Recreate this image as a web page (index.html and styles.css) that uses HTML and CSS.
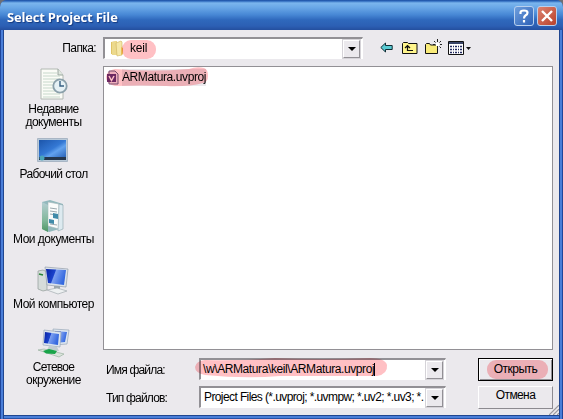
FILE: index.html
```html
<!DOCTYPE html>
<html lang="ru">
<head>
<meta charset="utf-8">
<title>Select Project File</title>
<link rel="stylesheet" href="styles.css">
</head>
<body>
<div class="window">
  <header class="titlebar">
    <h1>Select Project File</h1>
    <button class="cap help" aria-label="Help"><svg width="20" height="20" viewBox="0 0 20 20"><path d="M6.500 8V6.500Q6.500 4.500 10 4.500t3.500 2.200q0 1.600-1.800 2.600Q10 10.300 10 12.500M10 14v2.500" fill="none" stroke="#fff" stroke-width="2.200"/></svg></button>
    <button class="cap close" aria-label="Close"><svg width="20" height="20" viewBox="0 0 20 20"><path d="M5 5l10 10M15 5L5 15" stroke="#fff" stroke-width="2.400"/></svg></button>
  </header>
  <main class="client">
    <div class="lookin">
      <label><span class="t-folder">Папка:</span></label>
      <div class="combo">
        <svg class="folder" width="15" height="17" viewBox="0 0 15 17"><path d="M1 2l6-1v14l-6-1z" fill="#e0c468"/><path d="M2 2l5-1v14H2z" fill="#ecd98d"/><path d="M6 3l5-2 1 1v13l-5 1z" fill="#f5e7a8" stroke="#cfb45c" stroke-width=".6"/><path d="M11 7l2 1v6l-2 1z" fill="#e7bd54"/></svg>
        <span class="t-keil">keil</span>
        <i class="drop"></i>
        <b class="mark mark-keil"></b>
      </div>
      <div class="tools">
        <svg width="13" height="11" viewBox="0 0 13 11"><path d="M.8 5.500L5.500 1v2.500h6.700v4H5.500V10z" fill="#58cbd3" stroke="#102c34"/></svg>
        <svg width="16" height="14" viewBox="0 0 16 14"><path d="M.5 12.500v-10l1-1h4l1 1h8.500v10z" fill="#fff58c" stroke="#111"/><path d="M5.500 5v4.500H11M3 7l2.500-2.500L8 7" fill="none" stroke="#111" stroke-width="1.200"/></svg>
        <svg width="17" height="16" viewBox="0 0 17 16"><path d="M.5 14.500v-9l1-1h3l1 1.500h7v8.500z" fill="#f9eb79" stroke="#111"/><path d="M12.500 0v3m0 4v3M8 5.500h2m5 0h2M9 2l1.500 1.500m4 0L16 2M14.500 7.500L16 9" stroke="#222"/><path d="M11 4h3v3h-3z" fill="#fff"/></svg>
        <svg width="24" height="15" viewBox="0 0 24 15"><path d="M.5.5h15v13H.5z" fill="#fff" stroke="#111"/><path d="M1 1h14v2H1z" fill="#384468"/><path d="M2 5.500h2m1 0h1m1 0h2m1 0h1m1 0h2M2 8.500h2m1 0h1m1 0h2m1 0h1m1 0h2M2 11.500h2m1 0h1m1 0h2m1 0h1m1 0h2" stroke="#222b60" stroke-width="1.400"/><path d="M18 6h5l-2.500 3z" fill="#111"/></svg>
      </div>
    </div>
    <nav class="places">
      <a class="recent">
        <svg width="28" height="33" viewBox="0 0 28 33"><path d="M1 1h17l5 6v24H1z" fill="#fbfcf7" stroke="#b2b9b3"/><path d="M18 1v6h5" fill="#dfe7df" stroke="#9ba7a0"/><path d="M3 5h14M3 8h17M3 11h17M3 14h17M3 17h17M3 20h17M3 23h17M3 26h17M3 29h17" stroke="#c7d8cb"/><circle cx="20" cy="18" r="6.700" fill="#e6f1f5" stroke="#8ba0ab" stroke-width="1.800"/><path d="M20 13v5h4" fill="none" stroke="#365f82" stroke-width="1.400"/></svg>
        <span class="w1">Недавние</span><span class="w2">документы</span>
      </a>
      <a class="desktop">
        <svg width="31" height="25" viewBox="0 0 31 25"><defs><linearGradient id="d" x2="1" y2="1"><stop stop-color="#1c55aa"/><stop offset=".5" stop-color="#3478d4"/><stop offset=".65" stop-color="#62a2ee"/><stop offset="1" stop-color="#2b65b9"/></linearGradient></defs><path d="M.5.5h30v23H.5z" fill="#b9cad9" stroke="#a9b6c5"/><path d="M2 2h27v17H2z" fill="url(#d)"/><path d="M2 19h27v3H2z" fill="#25374d"/><circle cx="5" cy="20" r="2.500" fill="#4aa4b8"/></svg>
        <span class="w3">Рабочий стол</span>
      </a>
      <a class="docs">
        <svg width="25" height="34" viewBox="0 0 25 34"><defs><linearGradient id="g" y2="1" x2="0"><stop stop-color="#b4ced3"/><stop offset=".6" stop-color="#83b89c"/><stop offset="1" stop-color="#4d9664"/></linearGradient></defs><path d="M1 3l8-2 13 4v24l-14 4-7-3z" fill="#92b9bd"/><path d="M7 3l11 2v25L7 27z" fill="#fafcfb" stroke="#a4b7ba" stroke-width=".6"/><path d="M18 5l4 1v24l-5 2z" fill="#ddeaf0" stroke="#8aa6ad" stroke-width=".6"/><path d="M1 3l6 3v27l-6-3z" fill="url(#g)"/><path d="M9 9l7 1M9 12l7 1M9 15l3 .5M9 25l7 1" stroke="#9ca9af"/><path d="M12 14l5 1v5l-5-1zM8 20l5 1v4l-5-1z" fill="#408ba9"/></svg>
        <span class="w4">Мои документы</span>
      </a>
      <a class="computer">
        <svg width="33" height="29" viewBox="0 0 33 29"><defs><linearGradient id="m" x2="1" y2=".3"><stop stop-color="#0721a3"/><stop offset=".45" stop-color="#1b43cc"/><stop offset=".5" stop-color="#7c9ff0"/><stop offset="1" stop-color="#3468df"/></linearGradient></defs><path d="M1 5l5-1 4 2v18l-4 1-5-2z" fill="#d6dcda" stroke="#909b98" stroke-width=".7"/><path d="M2 8l4 1" stroke="#288537" stroke-width="1.500"/><path d="M8 1l23 2-2 18-19-2z" fill="#dce3ea" stroke="#939eaa" stroke-width=".7"/><path d="M9 3l20 1-2 15-16-2z" fill="url(#m)"/><path d="M17 20h6v4h-6z" fill="#9ba6ad"/><path d="M10 24l10-2 10 3-9 3z" fill="#edf0f1" stroke="#a5adb2" stroke-width=".7"/></svg>
        <span class="w5">Мой компьютер</span>
      </a>
      <a class="network">
        <svg width="33" height="30" viewBox="0 0 33 30"><path d="M16 1l16 1-2 14-13 1z" fill="#dce5ef" stroke="#9aa8b8" stroke-width=".7"/><path d="M18 3l12 1-2 10-10 1z" fill="url(#m)"/><path d="M7 2l17 2-1 15-17-2z" fill="#dce5ef" stroke="#9aa8b8" stroke-width=".7"/><path d="M8 4l14 2-1 11-14-2z" fill="url(#m)"/><path d="M12 18l8 1 2 4-12-1z" fill="#c1ccd0"/><path d="M1 22l6-1 20 5-5 3z" fill="#dbe4dd" stroke="#8faa96" stroke-width=".6"/><path d="M6 23l6-2 8 2-2 3-9-.5z" fill="#19a44a"/></svg>
        <span class="w6">Сетевое</span><span class="w7">окружение</span>
      </a>
    </nav>
    <section class="files">
      <div class="file">
        <svg width="13" height="15" viewBox="0 0 13 15"><path d="M2 1h6l3 3v10H2z" fill="#eee8f3" stroke="#77658c"/><path d="M0 4h9v8H0z" fill="#6d357e"/><path d="M2 6l2.500 4.500L7 6" fill="none" stroke="#fff" stroke-width="1.500"/></svg>
        <span class="t-file">ARMatura.uvproj</span>
        <svg class="mark mark-file" width="103" height="21" viewBox="0 0 103 21"><path d="M9 2Q45 5 83 2Q91-1 98 1Q102 2 102 9Q102 15 97 16Q82 20 60 19Q35 18 9 19Q0 17 0 10Q1 3 9 2z" fill="#ffc0c4"/></svg>
      </div>
    </section>
    <form class="fields">
      <label><span class="t-name">Имя файла:</span></label>
      <div class="combo">
        <span class="t-path">\w\ARMatura\keil\ARMatura.uvproj</span><i class="caret"></i><i class="drop"></i>
        <svg class="mark mark-path" width="193" height="21" viewBox="0 0 193 21"><path d="M10 2Q45 3 80 0Q125 2 175 0Q190 0 192 7Q193 16 182 18Q125 18 85 18Q50 21 10 17Q0 15 0 9Q1 3 10 2z" fill="#ffc0c4"/></svg>
      </div>
      <button type="button" class="btn open"><span class="t-open">Открыть</span><b class="mark mark-open"></b></button>
      <label><span class="t-type">Тип файлов:</span></label>
      <div class="combo"><span class="t-types">Project Files (*.uvproj; *.uvmpw; *.uv2; *.uv3; *.</span><i class="drop"></i></div>
      <button type="button" class="btn cancel"><span class="t-cancel">Отмена</span></button>
    </form>
    <svg class="grip" width="12" height="12" viewBox="0 0 12 12"><path d="M1 12L12 1M5 12l7-7M9 12l3-3" stroke="#fff" stroke-width="1"/><path d="M2 12L12 2M6 12l6-6M10 12l2-2" stroke="#9b999f" stroke-width="1.300"/></svg>
  </main>
</div>
</body>
</html>
```
FILE: styles.css
```css
* { box-sizing: border-box; }
body {
  margin: 0;
  background: #6d6f76;
  font: 12px/13px "Liberation Sans", Arial, sans-serif;
  color: #000;
}
span { white-space: nowrap; }
svg { display: block; flex: none; }
.window {
  width: 563px;
  height: 419px;
  padding: 0 4px 4px;
  border-radius: 7px 7px 0 0;
  background: linear-gradient(90deg, #1f459b 0 1px, #4a7ed8 1px 3px, #204690 3px 4px, transparent 4px 559px, #204690 559px 560px, #4a7ed8 560px 562px, #1f459b 562px), linear-gradient(#2f62bd 0 415px, #204690 415px 416px, #4a7ed8 416px 418px, #2553a8 418px);
}
.titlebar {
  display: flex;
  align-items: center;
  gap: 3px;
  height: 30px;
  margin: 0 -4px;
  padding: 2px 6px 0 7px;
  border-radius: 7px 7px 0 0;
  background: linear-gradient(#1c4da0 0, #2c68bd 1px, #7bb6ee 3px, #67a5e6 8px, #4686d4 15px, #2f68bc 20px, #2c5fb4 26px, #244f9e 30px);
}
h1 {
  flex: 1;
  margin: 1px 0 0;
  font: bold 13px/16px "Open Sans", "Noto Sans", sans-serif;
  letter-spacing: -.2px;
  color: #fff;
  text-shadow: 1px 1px 1px #153a80;
}
.cap {
  width: 20px;
  height: 20px;
  padding: 0;
  border: 1px solid #b8d0ee;
  border-radius: 3px;
  background: linear-gradient(135deg, #6f9fdd, #2d61b7);
}
.cap svg { margin: -1px; }
.close { background: linear-gradient(135deg, #dd8371, #b8412b); }
.client {
  position: relative;
  display: grid;
  grid-template: 36px 284px 65px / 99px 450px;
  height: 385px;
  background: #ebe9ed;
}
.lookin {
  grid-column: 1 / 3;
  display: grid;
  grid-template-columns: 99px 260px 1fr;
  padding-top: 7px;
}
.lookin label { padding: 5px 7px 0 0; text-align: right; }
.combo {
  position: relative;
  display: flex;
  align-items: center;
  height: 22px;
  padding: 1px 2px 1px 2px;
  border: solid;
  border-width: 2px 1px 1px 2px;
  border-color: #929095 #fff #fff #929095;
  background: #fff;
}
.folder { margin: 0 5px 0 3px; }
.drop {
  display: flex;
  flex: none;
  align-items: center;
  justify-content: center;
  width: 17px;
  height: 18px;
  margin-left: auto;
  border: 1px solid;
  border-color: #fff #929095 #929095 #fff;
  box-shadow: 0 0 0 1px #d5d3d8;
  background: #ebe9ed;
}
.drop::after {
  content: "";
  border: solid transparent;
  border-width: 4px 4px 0;
  border-top-color: #000;
}
.mark { position: absolute; mix-blend-mode: multiply; }
.mark-keil { left: 17px; top: 1px; width: 34px; height: 19px; border-radius: 9px; background: #ffc0c4; }
.tools { display: flex; gap: 9px; padding: 4px 0 0 17px; }
.tools svg:first-child { margin: 1px 0 0; }
.tools svg:nth-child(3) { margin: -2px 0 0 -2px; }
.tools svg:nth-child(4) { margin-left: -3px; }
.places { display: grid; grid-template-rows: 68px 62px 65px 65px 65px; justify-items: center; grid-row: 2 / 4; }
.places a { display: flex; flex-direction: column; align-items: center; width: 99px; }
.places span { display: block; letter-spacing: -.5px; }
.places .w1, .places .w3 { letter-spacing: -.6px; }
.places .w6 { letter-spacing: -.75px; }
.recent svg { margin: 2px 0; }
.desktop svg { margin: 4px 2px 5px 0; }
.docs svg { margin: 3px 0 0; }
.computer svg { margin: 5px 0 3px; }
.network svg { margin: 2px 0 3px; }
.files {
  width: 450px;
  height: 284px;
  padding: 2px 3px;
  border: 1px solid #929095;
  background: #fff;
}
.file { position: relative; display: flex; align-items: center; gap: 2px; width: 105px; height: 17px; }
.t-file { height: 17px; line-height: 17px; letter-spacing: -.4px; background: #ebe9ed; }
.mark-file { left: -1px; top: -2px; }
.fields {
  display: grid;
  grid-template: 22px 22px / 80px 247px 75px;
  column-gap: 16px;
  row-gap: 6px;
  padding-top: 8px;
}
.fields .btn { margin-left: 16px; }
.fields label { padding: 6px 0 0 3px; }
.t-folder, .t-cancel { letter-spacing: -.6px; }
.t-keil { letter-spacing: -.2px; }
.t-name, .t-type { letter-spacing: -.82px; }
.t-path { letter-spacing: -.4px; }
.t-types { padding-left: 1px; letter-spacing: -.6px; }
.t-open { letter-spacing: -.5px; }
.caret { width: 1px; height: 13px; background: #000; }
.mark-path { left: -6px; top: -2px; }
.btn {
  position: relative;
  width: 75px;
  height: 23px;
  padding: 0;
  border: 1px solid;
  border-color: #fff #8c8a90 #8c8a90 #fff;
  background: #ebe9ed;
  font: inherit;
  color: #000;
}
.cancel { padding-bottom: 4px; }
.open { border-color: #000; box-shadow: inset 1px 1px #fff, inset -1px -1px #929095; }
.mark-open { left: 8px; top: 1px; width: 61px; height: 19px; border-radius: 9px; background: #ffc0c4; }
.grip { position: absolute; right: 0; bottom: 0; }
```
